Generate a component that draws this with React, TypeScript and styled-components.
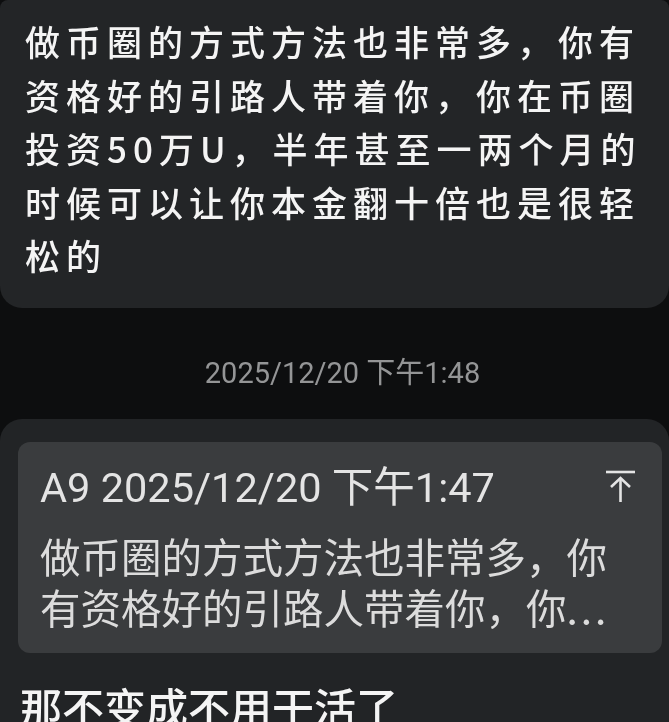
import styled, { createGlobalStyle } from "styled-components";

const GlobalStyle = createGlobalStyle`
  html, body {
    margin: 0;
    padding: 0;
    background: #0d0e0f;
  }
`;

const Screen = styled.div`
  width: 669px;
  height: 722px;
  overflow: hidden;
  background: #0d0e0f;
  font-family: "Noto Sans CJK SC", "Noto Sans", sans-serif;
  filter: blur(0.4px);
`;

const Bubble = styled.div`
  height: 308px;
  box-sizing: border-box;
  padding: 14px 20px 0 25px;
  background: #232527;
  border-radius: 8px 8px 22px 22px;
`;

const HandText = styled.p`
  margin: 0;
  color: #f4f4f4;
  font-size: 35px;
  font-weight: 500;
  line-height: 53.5px;
  letter-spacing: 6px;
  white-space: nowrap;
`;

const Time = styled.div`
  height: 111px;
  box-sizing: border-box;
  padding: 12px 0 0 16px;
  display: flex;
  align-items: center;
  justify-content: center;
  color: #949596;
  font-size: 29px;
  font-family: "Roboto", "Noto Sans CJK SC", sans-serif;
`;

const ReplyBubble = styled.div`
  height: 303px;
  box-sizing: border-box;
  padding: 23px 7px 0 18px;
  background: #222426;
  border-radius: 22px 22px 0 0;
`;

const Quote = styled.div`
  height: 211px;
  box-sizing: border-box;
  padding: 19px 26px 0 22px;
  background: #3a3c3e;
  border-radius: 12px;
`;

const QuoteHead = styled.div`
  display: flex;
  align-items: center;
  justify-content: space-between;
  height: 46px;
  color: #e4e4e4;
  font-size: 41.5px;
  font-family: "Roboto", "Noto Sans CJK SC", sans-serif;
  white-space: nowrap;
`;

const JumpSvg = styled.svg`
  margin-top: 6px;
`;

const QuoteBody = styled.p`
  margin: 23px 0 0;
  color: #dcdcdc;
  font-size: 40.5px;
  line-height: 51px;
  white-space: nowrap;
`;

const Dots = styled.span`
  letter-spacing: 3px;
`;

const Reply = styled.p`
  margin: 25px 0 0 2px;
  color: #f4f4f4;
  font-size: 42px;
  font-weight: 500;
  line-height: 56px;
  white-space: nowrap;
`;

const JumpIcon = () => (
  <JumpSvg width="30" height="34" viewBox="0 0 30 34" fill="none" stroke="#e4e4e4" strokeWidth="2.6">
    <path d="M0 2H29" />
    <path d="M14.5 32V8" />
    <path d="M5 17L14.5 8L24 17" />
  </JumpSvg>
);

const App = () => {
  return (
    <Screen>
      <GlobalStyle />
      <Bubble>
        <HandText>
          做币圈的方式方法也非常多，你有
          <br />
          资格好的引路人带着你，你在币圈
          <br />
          投资50万U，半年甚至一两个月的
          <br />
          时候可以让你本金翻十倍也是很轻
          <br />
          松的
        </HandText>
      </Bubble>
      <Time>2025/12/20 下午1:48</Time>
      <ReplyBubble>
        <Quote>
          <QuoteHead>
            <span>A9 2025/12/20 下午1:47</span>
            <JumpIcon />
          </QuoteHead>
          <QuoteBody>
            做币圈的方式方法也非常多，你
            <br />
            有资格好的引路人带着你，你<Dots>...</Dots>
          </QuoteBody>
        </Quote>
        <Reply>那不变成不用干活了</Reply>
      </ReplyBubble>
    </Screen>
  );
};

export default App;
